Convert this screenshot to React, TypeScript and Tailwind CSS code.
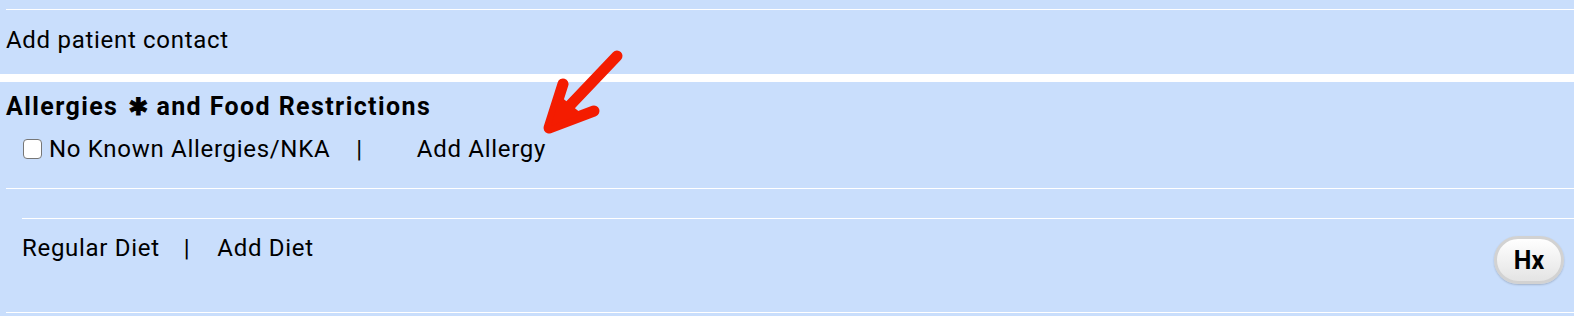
import React from "react";

function Arrow() {
  return (
    <svg
      className="absolute left-[536px] top-[44px] pointer-events-none"
      width="96"
      height="96"
      viewBox="536 44 96 96"
    >
      <g stroke="#f41c00" strokeWidth="11" strokeLinecap="round" strokeLinejoin="round" fill="none">
        <path d="M617 56 L558 118" />
        <path d="M563 84 L549 128 L594 111" />
      </g>
      <path d="M560 96 L551 126 L582 114 Z" fill="#f41c00" />
    </svg>
  );
}

export default function App() {
  return (
    <div className="relative w-[1574px] h-[316px] bg-white font-['Roboto',sans-serif] text-black overflow-hidden">
      {/* patient contact */}
      <div className="h-[74px] bg-[#c9defc] pt-[9px] pl-[6px]">
        <div className="border-t border-white" />
        <div className="pt-[16px] text-[24px] leading-[28px] tracking-[0.7px]">Add patient contact</div>
      </div>

      {/* allergies and diet */}
      <div className="mt-[8px] h-[234px] bg-[#c9defc] pl-[6px]">
        <h2 className="flex pt-[10px] text-[25px] leading-[30px] font-bold">
          <span className="tracking-[1.4px]">Allergies</span>
          <span className="ml-[10px] text-[24px] font-['DejaVu_Sans',sans-serif] font-black [-webkit-text-stroke:0.8px_black]">✱</span>
          <span className="ml-[8px] tracking-[1.4px]">and Food Restrictions</span>
        </h2>
        <div className="flex items-center pl-[17px] mt-[13px] text-[24px] leading-[28px] tracking-[0.7px]">
          <span className="w-[19px] h-[20px] rounded-[4px] border border-[#767676] bg-white" />
          <span className="ml-[7px]">No Known Allergies/NKA</span>
          <span className="ml-[26px]">|</span>
          <span className="ml-[54px]">Add Allergy</span>
        </div>
        <div className="mt-[25px] border-t border-white" />
        <div className="pl-[16px] pt-[29px]">
          <div className="border-t border-white" />
          <div className="flex items-start justify-between pr-[10px] h-[93px]">
            <div className="flex mt-[15px] text-[24px] leading-[28px] tracking-[0.7px]">
              <span>Regular Diet</span>
              <span className="ml-[24px]">|</span>
              <span className="ml-[27px]">Add Diet</span>
            </div>
            <button className="mt-[17px] w-[70px] h-[48px] rounded-[24px] border-[3px] border-[#d2d2d2] bg-gradient-to-b from-white to-[#e4e4e4] text-[25px] leading-none font-bold shadow-[0_1px_2px_rgba(0,0,0,0.2)]">
              Hx
            </button>
          </div>
        </div>
        <div className="border-t border-white" />
      </div>
      <Arrow />
    </div>
  );
}
